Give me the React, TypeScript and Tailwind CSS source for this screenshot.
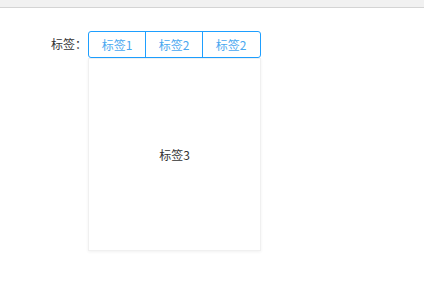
export default function App() {
  const tabs = [
    { label: '标签1', w: 'w-[56px]' },
    { label: '标签2', w: 'w-[57px] border-l border-[#1e9fff]' },
    { label: '标签2', w: 'w-[57px] border-l border-[#1e9fff]' },
  ];
  return (
    <div
      className="w-[424px] h-[295px] bg-white"
      style={{ fontFamily: '"Noto Sans CJK SC", "Noto Sans", sans-serif' }}
    >
      <div className="h-[8px] bg-[#f1f1f1] border-b border-[#d4d4d4]" />
      <div className="flex pl-[51px] pt-[23px]">
        <div className="h-[26px] flex items-center text-[12px] text-[#333] pr-[1px]">标签：</div>
        <div className="flex flex-col">
          <div className="flex h-[27px] border border-[#1e9fff] rounded-[3px] overflow-hidden">
            {tabs.map((t, i) => (
              <div
                key={i}
                className={`${t.w} box-border flex items-center justify-center text-[12px] text-[#4aa8f0]`}
              >
                {t.label}
              </div>
            ))}
          </div>
          <div className="w-[173px] h-[193px] flex items-center justify-center text-[12px] text-[#333] bg-white border border-[#f0f0f0] shadow-[0_1px_3px_rgba(0,0,0,0.06)]">
            标签3
          </div>
        </div>
      </div>
    </div>
  );
}
